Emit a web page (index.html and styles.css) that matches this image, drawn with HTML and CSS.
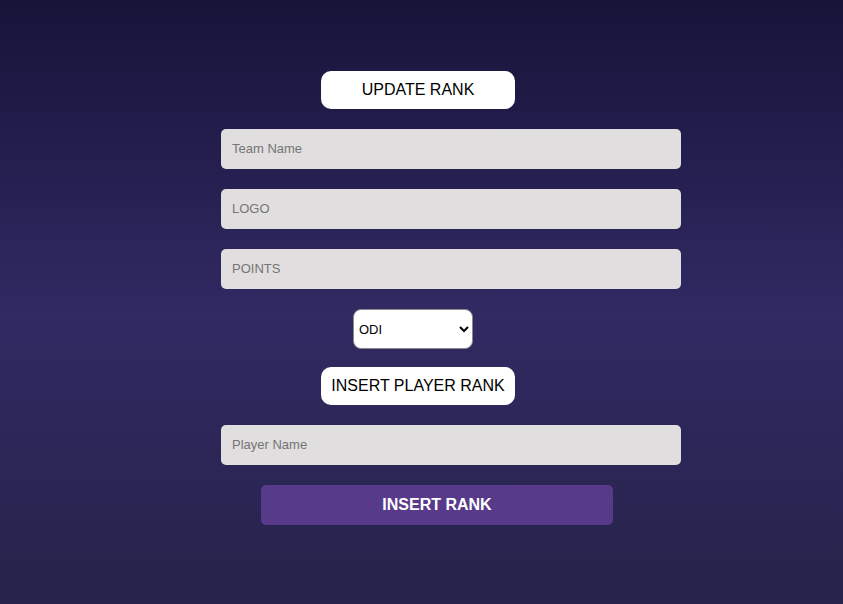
FILE: index.html
```html
<!DOCTYPE html>
<html>
<head>
<meta charset="utf-8">
<link rel="stylesheet" href="styles.css">
</head>
<body>
<div class="page">
  <form class="form">
    <div class="title title-update">UPDATE RANK</div>
    <input class="field" type="text" placeholder="Team Name">
    <input class="field" type="text" placeholder="LOGO">
    <input class="field" type="text" placeholder="POINTS">
    <select class="format">
      <option>ODI</option>
      <option>T20</option>
      <option>TEST</option>
    </select>
    <div class="title title-player">INSERT PLAYER RANK</div>
    <input class="field" type="text" placeholder="Player Name">
    <button class="submit" type="button">INSERT RANK</button>
  </form>
</div>
</body>
</html>
```
FILE: styles.css
```css
html, body {
  margin: 0;
  padding: 0;
  height: 100%;
}
body {
  font-family: "Liberation Sans", Arial, sans-serif;
  background: linear-gradient(180deg, #17143a 0%, #231e4d 25%, #312a63 52%, #2c2758 72%, #27234a 100%);
  min-height: 604px;
}
.page {
  padding-top: 71px;
  padding-left: 221px;
}
.form {
  width: 460px;
  display: flex;
  flex-direction: column;
  align-items: flex-start;
}
.title {
  width: 194px;
  height: 38px;
  background: #ffffff;
  border-radius: 10px;
  display: flex;
  align-items: center;
  justify-content: center;
  font-size: 16px;
  color: #000;
  box-sizing: border-box;
  margin-left: 100px;
}
.title-update {
  margin-bottom: 20px;
}
.title-player {
  margin-top: 18px;
  margin-bottom: 20px;
}
.field {
  width: 460px;
  height: 40px;
  box-sizing: border-box;
  border: none;
  border-radius: 5px;
  background: #e0dede;
  padding: 0 11px 2px 11px;
  font-family: "Liberation Sans", Arial, sans-serif;
  font-size: 13px;
  color: #333;
  margin-bottom: 20px;
  outline: none;
}
.field::placeholder {
  color: #757575;
}
.format {
  width: 120px;
  height: 40px;
  margin-left: 132px;
  box-sizing: border-box;
  background: #ffffff;
  border: 1px solid #8a8a8a;
  border-radius: 8px;
  font-family: "Liberation Sans", Arial, sans-serif;
  font-size: 13px;
  color: #000;
  padding: 0 1px;
}
.submit {
  width: 352px;
  height: 40px;
  margin-left: 40px;
  border: none;
  border-radius: 5px;
  background: #583a8a;
  color: #ffffff;
  font-family: "Liberation Sans", Arial, sans-serif;
  font-size: 16px;
  font-weight: bold;
  cursor: pointer;
}
```
